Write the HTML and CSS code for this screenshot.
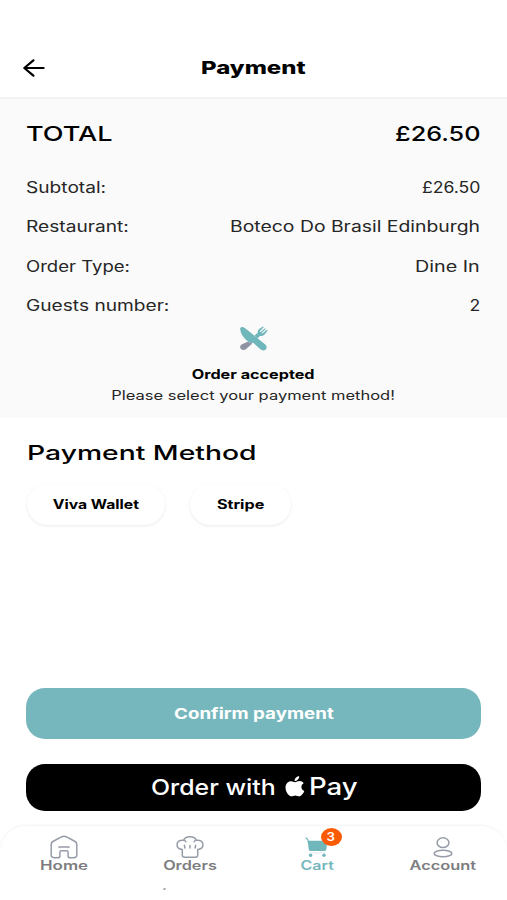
FILE: index.html
```html
<!DOCTYPE html>
<html lang="en">
<head>
<meta charset="utf-8">
<title>Payment</title>
<link rel="stylesheet" href="styles.css">
</head>
<body>
<div class="screen">
  <header class="header">
    <svg class="back" viewBox="0 0 22 18" aria-hidden="true"><path d="M10.4 1.3 1.3 9l9.1 7.7M1.6 9h19"/></svg>
    <h1><span class="wide w-132">Payment</span></h1>
  </header>

  <section class="summary">
    <div class="row total"><span class="wide w-131 left">TOTAL</span><span class="wide w-123 right">£26.50</span></div>
    <div class="row"><span class="wide w-126 left">Subtotal:</span><span class="wide w-116 right">£26.50</span></div>
    <div class="row"><span class="wide w-126 left">Restaurant:</span><span class="wide w-127 right">Boteco Do Brasil Edinburgh</span></div>
    <div class="row"><span class="wide w-122 left">Order Type:</span><span class="wide w-130 right">Dine In</span></div>
    <div class="row"><span class="wide w-126 left">Guests number:</span><span class="wide w-116 right">2</span></div>
    <div class="status">
      <svg class="cutlery" viewBox="0 0 30 26" aria-hidden="true">
        <path class="teal-fill" d="M1.1 2.2C2.3.3 4.3.7 5.8 2L26 18.2c2 1.8 2.2 3.7.8 5.2-1.5 1.5-3.9 1.3-5.400-.1l-7.200-6.600c-2.200.7-4.100.1-5.800-1.600C4.700 11.600 1.500 8 1.100 2.200Z"/>
        <path class="teal-fill" d="m15.500 9.500 3.200-2.700c-.2-2.200.8-3.600 2.600-4.600L24 .6l.8.7-4.100 4 .8.7L26 2.200l.8.7-4.400 4 .8.7 4.700-3.800.8.7-2.500 3.300c-1.500 1.900-3.200 2.600-5.200 2.200l-2.700 2.600Z"/>
        <path class="gray-fill" d="m8.600 15.700 4.700 1.700-5.900 5.300c-1.700 1.500-4 1.700-5.400.4-1.400-1.200-1.100-3.200.5-4.500Z"/>
      </svg>
      <strong><span class="wide w-127">Order accepted</span></strong>
      <p><span class="wide w-130">Please select your payment method!</span></p>
    </div>
  </section>

  <section class="methods">
    <h2><span class="wide w-139 left">Payment Method</span></h2>
    <div class="pills">
      <button class="pill viva"><span class="wide w-124">Viva Wallet</span></button>
      <button class="pill stripe"><span class="wide w-127">Stripe</span></button>
    </div>
  </section>

  <section class="actions">
    <button class="confirm"><span class="wide w-125">Confirm payment</span></button>
    <button class="apple-pay">
      <span class="order"><span class="wide w-113 left">Order with</span></span>
      <svg class="apple" viewBox="0 0 20 21" aria-hidden="true"><path d="M14.200.2c.1 1.500-.5 2.700-1.500 3.600-.9.900-2 1.300-3.100 1.200-.1-1.400.5-2.600 1.500-3.500.8-.8 2-1.300 3.100-1.300ZM18.700 7.300c-1.500.9-2.300 2.100-2.300 3.700 0 1.900 1.100 3.300 2.900 4-.6 1.700-2.200 4.200-3.800 5-1.800.900-3.300-.5-5.200-.5s-3.300 1.400-5.100.6C3 19.100.5 15.500.5 11.600c0-3.900 2.600-6.400 5.500-6.400 1.700 0 2.900 1 4.100 1S12.500 5 14.600 5c1.700 0 3.200.8 4.100 2.300Z"/></svg>
      <span class="pay"><span class="wide w-115 left">Pay</span></span>
    </button>
  </section>

  <nav class="tabs">
    <a class="tab">
      <svg class="icon" viewBox="0 0 30 24" aria-hidden="true"><path d="M12.900 1.700 3.900 6.500Q2.200 7.500 2.200 9.300v10.500q0 3 3.400 3h3.200q2.100 0 2.100-1.900v-3.700q0-1.500 1.600-1.500h5q1.600 0 1.600 1.500v3.700q0 1.900 2.100 1.900h3.200q3.400 0 3.400-3V9.300q0-1.800-1.700-2.800l-9-4.800Q15 .7 12.900 1.700ZM9.800 12.100h10.400" /></svg>
      <span class="wide w-132">Home</span>
    </a>
    <a class="tab">
      <svg class="icon" viewBox="0 0 30 24" aria-hidden="true"><path d="M7.300 14.500C3.600 14 2 12 2 9.700 2 6.800 4.700 4.800 8.600 5.300 9.500 3 11.800 1.700 15 1.700s5.500 1.300 6.400 3.600c3.900-.5 6.600 1.500 6.600 4.400 0 2.300-1.600 4.300-5.300 4.800v5.700q0 2-2.400 2H9.700q-2.400 0-2.400-2ZM8.600 5.300q1.900.3 2.300 1.500m10.500-1.500q-1.900.3-2.300 1.500M9.400 10.300l.5 2.700m5.100-2.500V13m5.600-2.700-.5 2.700"/></svg>
      <span class="wide w-128">Orders</span>
    </a>
    <a class="tab active">
      <svg class="icon" viewBox="0 0 30 24" aria-hidden="true"><path class="solid" d="M5.700 5.800h18.500q1.300 0 1.100 1.300l-1 7.300q-.2 1.500-2 1.500H8.600q-1.700 0-1.900-1.500Z"/><path class="handle" d="m3.900 3 1.700 1.200.9 3.200"/><circle class="solid" cx="8.600" cy="20.200" r="1.700"/><circle class="solid" cx="22" cy="20.200" r="1.700"/><path class="axle" d="M8 17.900h15.500"/></svg>
      <span class="badge"><span class="wide w-116">3</span></span>
      <span class="wide w-126">Cart</span>
    </a>
    <a class="tab">
      <svg class="icon" viewBox="0 0 30 24" aria-hidden="true"><ellipse cx="15" cy="7.700" rx="5.900" ry="4.900"/><ellipse cx="15" cy="18.500" rx="8.900" ry="3.200"/></svg>
      <span class="wide w-129">Account</span>
    </a>
    <i class="speck"></i>
  </nav>
</div>
</body>
</html>
```
FILE: styles.css
```css
* { box-sizing: border-box; }

body {
  margin: 0;
  background: #fff;
  color: #000;
  font-family: Inter, "Liberation Sans", sans-serif;
}

h1, h2, p { margin: 0; }

button {
  border: 0;
  padding: 0;
  font-family: inherit;
  color: inherit;
}

.screen {
  display: flex;
  flex-direction: column;
  width: 507px;
  height: 900px;
  overflow: hidden;
}
.header, .summary, .methods, .actions { flex-shrink: 0; }

/* Extended letterforms */
.wide { display: inline-block; white-space: nowrap; }
.left { transform-origin: left center; }
.right { transform-origin: right center; }
.w-113 { transform: scaleX(1.13); }
.w-115 { transform: scaleX(1.15); }
.w-116 { transform: scaleX(1.16); }
.w-122 { transform: scaleX(1.22); }
.w-123 { transform: scaleX(1.23); }
.w-124 { transform: scaleX(1.24); }
.w-125 { transform: scaleX(1.25); }
.w-126 { transform: scaleX(1.26); }
.w-127 { transform: scaleX(1.275); }
.w-128 { transform: scaleX(1.28); }
.w-129 { transform: scaleX(1.29); }
.w-130 { transform: scaleX(1.3); }
.w-131 { transform: scaleX(1.32); }
.w-132 { transform: scaleX(1.33); }
.w-139 { transform: scaleX(1.395); }

.header {
  display: grid;
  grid-template-columns: 60px 1fr 60px;
  align-items: center;
  height: 97px;
  padding-top: 39px;
}
.back {
  width: 22px;
  height: 18px;
  margin-left: 23px;
  fill: none;
  stroke: #000;
  stroke-width: 2.2;
  stroke-linecap: round;
  stroke-linejoin: round;
}
.header h1 {
  text-align: center;
  font-size: 18px;
  line-height: 24px;
  font-weight: 800;
}

.summary {
  height: 321px;
  padding: 17px 27px 0 26px;
  background: #fafafa;
  border-top: 2px solid #f2f2f2;
}
.row {
  display: flex;
  justify-content: space-between;
  height: 39.4px;
  font-size: 15.2px;
  line-height: 39.4px;
  color: #262626;
}
.total {
  height: 52px;
  font-size: 20.5px;
  line-height: 36px;
  font-weight: 550;
  color: #000;
}
.status {
  display: flex;
  flex-direction: column;
  align-items: center;
  text-align: center;
  padding-left: 1px;
}
.cutlery { width: 30px; height: 26px; }
.teal-fill { fill: #70b7bb; }
.gray-fill { fill: #8e93a3; }
.status strong {
  margin-top: 12px;
  font-size: 12.7px;
  line-height: 21px;
  font-weight: 700;
}
.status p {
  font-size: 12.7px;
  line-height: 21px;
  color: #262626;
}

.methods { height: 270px; padding: 20px 27px 0; }
.methods h2 {
  font-size: 20.3px;
  line-height: 29px;
  font-weight: 550;
}
.pills { display: flex; gap: 25px; margin-top: 17px; }
.pill {
  height: 41px;
  border-radius: 21px;
  background: #fff;
  box-shadow: 0 1px 3px rgba(0, 0, 0, .09);
  font-size: 12.7px;
  line-height: 41px;
  font-weight: 700;
}
.viva { width: 138px; }
.stripe { width: 101px; }

.actions {
  display: flex;
  flex-direction: column;
  gap: 25px;
  padding: 0 26px;
}
.confirm {
  height: 51px;
  border-radius: 19px;
  background: #76b7bd;
  color: #fff;
  font-size: 15px;
  font-weight: 700;
}
.apple-pay {
  display: flex;
  align-items: center;
  height: 47px;
  padding-left: 125px;
  border-radius: 19px;
  background: #000;
  color: #fff;
  line-height: 47px;
  font-weight: 450;
}
.order { width: 134px; text-align: left; font-size: 22px; }
.apple { width: 20px; height: 21px; margin-top: -2px; fill: #fff; }
.pay { margin: -2px 0 0 4px; font-size: 24px; }

.tabs {
  position: relative;
  display: grid;
  grid-template-columns: repeat(4, 126.5px);
  justify-content: center;
  height: 74px;
  margin-top: 15px;
  padding-top: 9px;
  border-radius: 26px 26px 0 0;
  background: #fff;
  box-shadow: 0 -1px 3px rgba(0, 0, 0, .05);
}
.tab {
  position: relative;
  display: flex;
  flex-direction: column;
  align-items: center;
  font-size: 12.7px;
  line-height: 14px;
  font-weight: 600;
  color: #7d7d80;
}
.icon {
  width: 30px;
  height: 24px;
  fill: none;
  stroke: #969ba8;
  stroke-width: 1.5;
  stroke-linecap: round;
  stroke-linejoin: round;
}
.active { color: #76b7bd; }
.solid { fill: #70b7bb; stroke: none; }
.handle { stroke: #70b7bb; stroke-width: 1.2; }
.axle { stroke: #c5e1e3; stroke-width: .6; }
.badge {
  position: absolute;
  top: -7px;
  left: 67px;
  width: 21px;
  height: 18px;
  border-radius: 50%;
  background: #fb5a05;
  color: #fff;
  font-size: 11.5px;
  line-height: 18px;
  text-align: center;
}
.speck {
  position: absolute;
  left: 163px;
  top: 62px;
  width: 3px;
  height: 2px;
  border-radius: 50%;
  background: #aaa;
}
```
